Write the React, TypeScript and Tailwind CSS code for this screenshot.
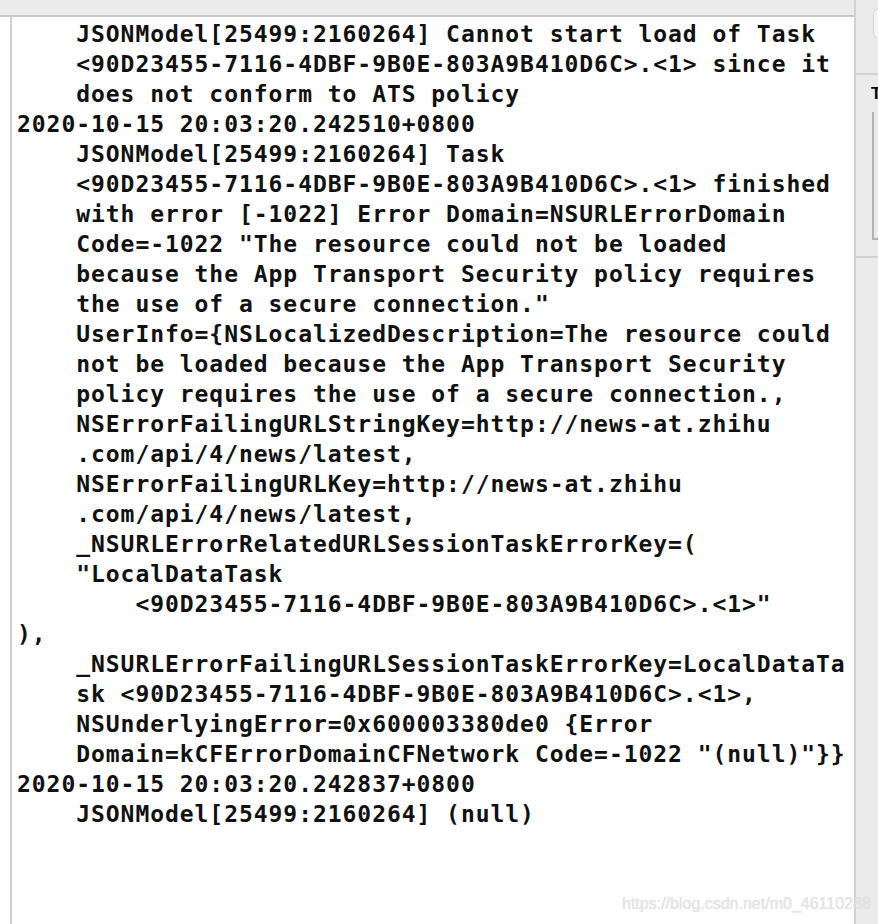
import React from "react";

const lines = [
  "    JSONModel[25499:2160264] Cannot start load of Task",
  "    <90D23455-7116-4DBF-9B0E-803A9B410D6C>.<1> since it",
  "    does not conform to ATS policy",
  "2020-10-15 20:03:20.242510+0800",
  "    JSONModel[25499:2160264] Task",
  "    <90D23455-7116-4DBF-9B0E-803A9B410D6C>.<1> finished",
  "    with error [-1022] Error Domain=NSURLErrorDomain",
  '    Code=-1022 "The resource could not be loaded',
  "    because the App Transport Security policy requires",
  '    the use of a secure connection."',
  "    UserInfo={NSLocalizedDescription=The resource could",
  "    not be loaded because the App Transport Security",
  "    policy requires the use of a secure connection.,",
  "    NSErrorFailingURLStringKey=http://news-at.zhihu",
  "    .com/api/4/news/latest,",
  "    NSErrorFailingURLKey=http://news-at.zhihu",
  "    .com/api/4/news/latest,",
  "    _NSURLErrorRelatedURLSessionTaskErrorKey=(",
  '    "LocalDataTask',
  '        <90D23455-7116-4DBF-9B0E-803A9B410D6C>.<1>"',
  "),",
  "    _NSURLErrorFailingURLSessionTaskErrorKey=LocalDataTa",
  "    sk <90D23455-7116-4DBF-9B0E-803A9B410D6C>.<1>,",
  "    NSUnderlyingError=0x600003380de0 {Error",
  '    Domain=kCFErrorDomainCFNetwork Code=-1022 "(null)"}}',
  "2020-10-15 20:03:20.242837+0800",
  "    JSONModel[25499:2160264] (null)",
];

const App = () => {
  return (
    <div className="relative flex w-[878px] h-[924px] overflow-hidden bg-[#ebebeb]">
      {/* Console */}
      <div className="flex flex-col w-[854px] shrink-0">
        <div className="h-[17px] bg-[#ececec] border-b-2 border-[#c8c8c8]" />
        <div className="flex-1 flex bg-white pl-[10px]">
          <div className="flex-1 border-l-2 border-[#d0d0d0] pl-[5px] pt-[2px]">
            {lines.map((l, i) => (
              <div
                key={i}
                className="h-[30px] leading-[30px] whitespace-pre text-[23px] font-bold tracking-[0.95px] text-[#111] font-['DejaVu_Sans_Mono',monospace]"
              >
                {l}
              </div>
            ))}
          </div>
        </div>
      </div>

      {/* Inspector panel */}
      <div className="flex-1 flex flex-col border-l-2 border-[#d2d2d2] bg-[#ebebeb]">
        <div className="h-[75px] border-b-2 border-[#d2d2d2] pt-[8px] pl-[17px]">
          <div className="h-[31px] rounded-l-[6px] border border-r-0 border-[#d6d6d6] bg-[#f4f4f4]" />
        </div>
        <div className="h-[183px] border-b-2 border-[#d0d0d0] pt-[10px] pl-[15px]">
          <div className="text-[17px] font-bold leading-[18px] text-black font-['Liberation_Sans',sans-serif]">
            T
          </div>
          <div className="mt-[9px] ml-[1px] h-[128px] border-l-2 border-b-2 border-[#b3b3b3]" />
        </div>
      </div>

      {/* Watermark */}
      <div className="absolute left-[622px] top-[892px] text-[16px] text-[#e6e6e6] font-['Liberation_Sans',sans-serif] [text-shadow:0_0_1px_rgba(0,0,0,0.15)]">
        https://blog.csdn.net/m0_46110288
      </div>
    </div>
  );
};

export default App;
